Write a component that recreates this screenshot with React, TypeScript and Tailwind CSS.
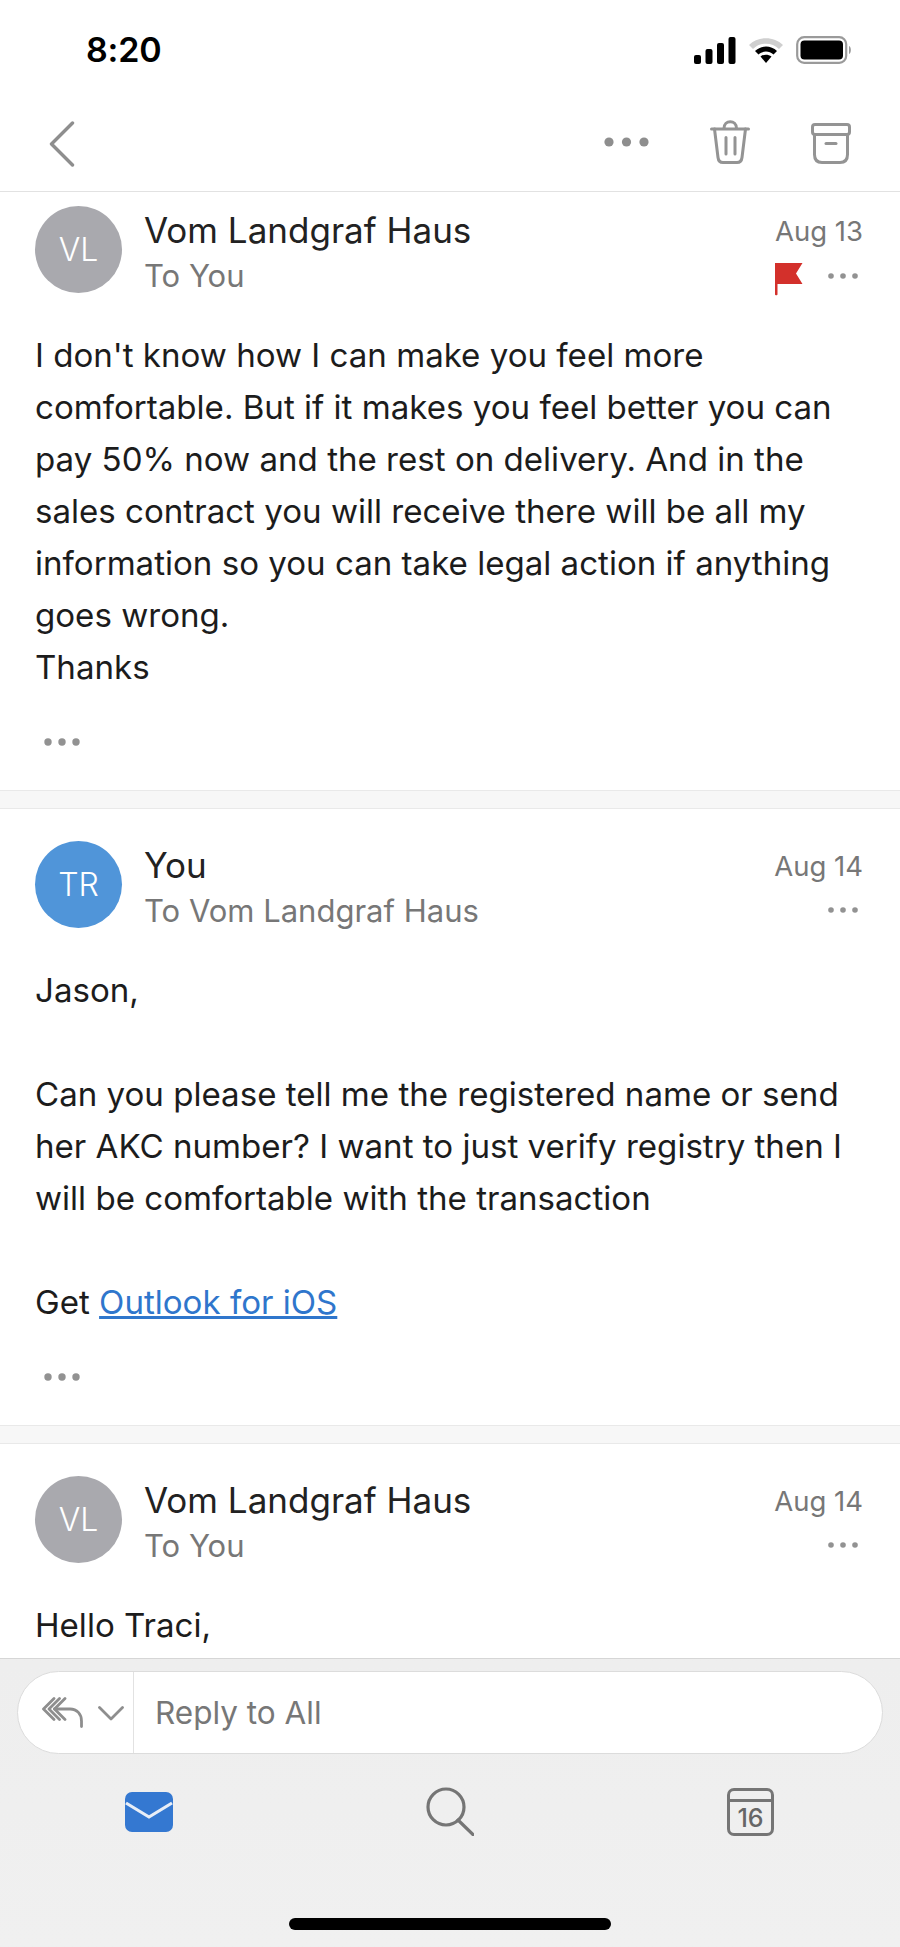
import React from "react";

const font = { fontFamily: '"Inter", "Liberation Sans", sans-serif' };

function SmallDots() {
  return (
    <svg width="32" height="8" viewBox="0 0 32 8" className="block">
      <circle cx="4" cy="4" r="2.8" fill="#929292" />
      <circle cx="16" cy="4" r="2.8" fill="#929292" />
      <circle cx="28" cy="4" r="2.8" fill="#929292" />
    </svg>
  );
}

function BodyDots() {
  return (
    <svg width="36" height="8" viewBox="0 0 36 8" className="block">
      <circle cx="4" cy="4" r="3.7" fill="#929292" />
      <circle cx="18" cy="4" r="3.7" fill="#929292" />
      <circle cx="32" cy="4" r="3.7" fill="#929292" />
    </svg>
  );
}

function NavDots() {
  return (
    <svg width="45" height="10" viewBox="0 0 45 10" className="block">
      <circle cx="5" cy="5" r="4.6" fill="#8e8e8e" />
      <circle cx="22.5" cy="5" r="4.6" fill="#8e8e8e" />
      <circle cx="40" cy="5" r="4.6" fill="#8e8e8e" />
    </svg>
  );
}

function StatusBar() {
  return (
    <div className="flex items-center justify-between h-[99px] pl-[86px] pr-[48px] pt-[1px]">
      <span className="text-[34px] leading-[40px] font-semibold text-black tracking-[-0.2px]">8:20</span>
      <div className="flex items-center gap-[12px]">
        <svg width="42" height="27" viewBox="0 0 42 27">
          <rect x="0" y="18" width="7" height="9" rx="2" fill="#000" />
          <rect x="11.5" y="12" width="7" height="15" rx="2" fill="#000" />
          <rect x="23" y="6" width="7" height="21" rx="2" fill="#000" />
          <rect x="34.5" y="0" width="7" height="27" rx="2" fill="#000" />
        </svg>
        <svg width="36" height="27" viewBox="0 0 36 27">
          <path d="M1 8 C10 -1 26 -1 35 8 L31 12 C24 5 12 5 5 12 Z" fill="#cfcfcf" />
          <path d="M7 14 C13 8 23 8 29 14 L25.5 17.5 C21 13.5 15 13.5 10.5 17.5 Z" fill="#000" />
          <path d="M12.5 19.5 C16 17 20 17 23.5 19.5 L18 26 Z" fill="#000" />
        </svg>
        <svg width="56" height="28" viewBox="0 0 56 28">
          <rect x="1.2" y="1.2" width="49" height="25.6" rx="7" fill="none" stroke="#9a9a9a" strokeWidth="2.2" />
          <rect x="4.5" y="4.5" width="42.5" height="19" rx="4" fill="#000" />
          <path d="M53 10 C55.5 11 55.5 17 53 18 Z" fill="#9a9a9a" />
        </svg>
      </div>
    </div>
  );
}

function NavBar() {
  return (
    <div className="flex items-center h-[93px] border-b border-[#e2e2e2] pl-[49px] pr-[49px]">
      <svg width="26" height="46" viewBox="0 0 26 46" fill="none" className="mt-[-3px]">
        <path d="M23.5 2 L2.5 23 L23.5 44" stroke="#8e8e8e" strokeWidth="3.4" strokeLinecap="round" strokeLinejoin="round" />
      </svg>
      <div className="flex-1" />
      <div className="mt-[-6px]">
        <NavDots />
      </div>
      <svg width="40" height="44" viewBox="0 0 40 44" fill="none" className="ml-[61px] mt-[-7px]" stroke="#949494" strokeWidth="3" strokeLinecap="round" strokeLinejoin="round">
        <path d="M1.5 9 H38.5" />
        <path d="M14 8.5 C14 -0.5 26.5 -0.5 26.5 8.5" />
        <path d="M4.5 9 L8 37.5 C8.4 41 10 42.5 13 42.5 H27 C30 42.5 31.6 41 32 37.5 L35.5 9" />
        <path d="M16 17.5 V34 M25 17.5 V34" />
      </svg>
      <svg width="40" height="41" viewBox="0 0 40 41" fill="none" className="ml-[61px] mt-[-4px]" stroke="#949494" strokeWidth="3" strokeLinecap="round" strokeLinejoin="round">
        <rect x="1.5" y="1.5" width="37" height="10" rx="2.5" />
        <path d="M3.5 11.5 V31.5 C3.5 36.5 6 39.5 11 39.5 H29 C34 39.5 36.5 36.5 36.5 31.5 V11.5" />
        <path d="M15 20.5 H25" />
      </svg>
    </div>
  );
}

function Flag() {
  return (
    <svg width="28" height="33" viewBox="0 0 28 33" className="block">
      <path d="M0 0 H27.5 L21 10.5 L27.5 21 H2.5 V31.5 C2.5 32.6 0 32.6 0 31.5 Z" fill="#d3302b" />
    </svg>
  );
}

type CardProps = {
  initials: string;
  color: string;
  name: string;
  to: string;
  date: string;
  flag?: boolean;
  top: string;
  children: React.ReactNode;
  dots?: boolean;
};

function Card({ initials, color, name, to, date, flag, top, children, dots = true }: CardProps) {
  return (
    <div className={`bg-white ${top}`}>
      <div className="flex h-[87px] pl-[35px] pr-[37px]">
        <div
          className={`w-[87px] h-[87px] rounded-full flex items-center justify-center text-white text-[32px] font-light shrink-0 ${color}`}
        >
          {initials}
        </div>
        <div className="flex-1 ml-[22px] mt-[1px] min-w-0">
          <div className="h-[46px] leading-[46px] text-[35px] text-[#222222]">{name}</div>
          <div className="h-[46px] leading-[46px] text-[31px] text-[#777777]">{to}</div>
        </div>
        <div className="flex flex-col items-end mt-[2px]">
          <div className="h-[46px] leading-[46px] text-[27.5px] text-[#777777]">{date}</div>
          <div className="h-[46px] flex items-center">
            {flag && (
              <div className="mr-[24px] mt-[9px]">
                <Flag />
              </div>
            )}
            <div className="mr-[4px] mt-[2px]">
              <SmallDots />
            </div>
          </div>
        </div>
      </div>
      <div className="mt-[36px] px-[35px] text-[33.1px] leading-[52px] text-[#1c1c1c]">{children}</div>
      {dots && (
        <div className="pl-[44px] mt-[45px] pb-[44px]">
          <BodyDots />
        </div>
      )}
    </div>
  );
}

function Gap() {
  return <div className="h-[19px] bg-[#f7f7f7] border-y border-[#e9e9e9]" />;
}

function Thread() {
  return (
    <div className="flex-1 min-h-0 overflow-hidden bg-white">
      <Card initials="VL" color="bg-[#a9a9ae]" name="Vom Landgraf Haus" to="To You" date="Aug 13" flag top="pt-[14px]">
        <p className="whitespace-nowrap">I don't know how I can make you feel more</p>
        <p className="whitespace-nowrap">comfortable. But if it makes you feel better you can</p>
        <p className="whitespace-nowrap">pay 50% now and the rest on delivery. And in the</p>
        <p className="whitespace-nowrap">sales contract you will receive there will be all my</p>
        <p className="whitespace-nowrap">information so you can take legal action if anything</p>
        <p className="whitespace-nowrap">goes wrong.</p>
        <p>Thanks</p>
      </Card>
      <Gap />
      <Card initials="TR" color="bg-[#5095d9]" name="You" to="To Vom Landgraf Haus" date="Aug 14" top="pt-[32px]">
        <p>Jason,</p>
        <p className="h-[52px]" />
        <p className="whitespace-nowrap">Can you please tell me the registered name or send</p>
        <p className="whitespace-nowrap">her AKC number? I want to just verify registry then I</p>
        <p className="whitespace-nowrap">will be comfortable with the transaction</p>
        <p className="h-[52px]" />
        <p>
          Get <a className="text-[#2f76cc] underline">Outlook for iOS</a>
        </p>
      </Card>
      <Gap />
      <Card initials="VL" color="bg-[#a9a9ae]" name="Vom Landgraf Haus" to="To You" date="Aug 14" top="pt-[32px]" dots={false}>
        <p>Hello Traci,</p>
      </Card>
    </div>
  );
}

function ReplyBar() {
  return (
    <div className="flex h-[83px] ml-[17px] mr-[17px] mt-[12px] rounded-full bg-white border border-[#dcdcdc] overflow-hidden">
      <div className="w-[116px] border-r border-[#e2e2e2] flex items-center pl-[24px] shrink-0">
        <svg width="41" height="31" viewBox="0 0 41 31" fill="none" stroke="#8e8e8e" strokeWidth="2.8" strokeLinecap="round" strokeLinejoin="round">
          <path d="M12 1.5 L1.5 12 L12 22.5" />
          <path d="M17.5 1.5 L7 12 L17.5 22.5" />
          <path d="M23 1.5 L12.5 12 L23 22.5" />
          <path d="M12.5 12 H28 C35 12 39.5 17 39.5 24 V29.5" />
        </svg>
        <svg width="26" height="15" viewBox="0 0 26 15" fill="none" stroke="#8e8e8e" strokeWidth="2.8" strokeLinecap="round" strokeLinejoin="round" className="ml-[15px] mt-[1px]">
          <path d="M1.5 1.5 L13 13 L24.5 1.5" />
        </svg>
      </div>
      <div className="flex-1 flex items-center pl-[21px] text-[31.5px] text-[#777777]">Reply to All</div>
    </div>
  );
}

function TabBar() {
  return (
    <div className="flex items-start justify-between pl-[125px] pr-[126px] mt-[37px]">
      <svg width="48" height="40" viewBox="0 0 48 40" className="mt-[1px]">
        <rect x="0" y="0" width="48" height="40" rx="7" fill="#3478d1" />
        <path d="M1 11 L24 25 L47 11" fill="none" stroke="#e8eef7" strokeWidth="3.2" />
      </svg>
      <svg width="48" height="49" viewBox="0 0 48 49" fill="none" stroke="#757575" strokeWidth="3.2" strokeLinecap="round" className="mt-[-4px]">
        <circle cx="20" cy="20" r="18" />
        <path d="M32 33 L47 47.5" />
      </svg>
      <div className="relative w-[47px] h-[48px] mt-[-3px] border-[3.5px] border-[#757575] rounded-[7px] flex items-end justify-center">
        <div className="absolute left-0 right-0 top-[8px] h-[3px] bg-[#757575]" />
        <span className="text-[25px] leading-[29px] font-medium text-[#666666]">16</span>
      </div>
    </div>
  );
}

export default function App() {
  return (
    <div style={font} className="w-[900px] h-[1947px] flex flex-col overflow-hidden bg-white">
      <div className="h-[192px] shrink-0 bg-white">
        <StatusBar />
        <NavBar />
      </div>
      <Thread />
      <div className="h-[289px] shrink-0 bg-linear-to-b from-[#eeeeee] to-[#f0f0f0] border-t border-[#d6d6d6] flex flex-col">
        <ReplyBar />
        <TabBar />
        <div className="flex-1" />
        <div className="w-[322px] h-[12px] rounded-full bg-black self-center mb-[17px]" />
      </div>
    </div>
  );
}
